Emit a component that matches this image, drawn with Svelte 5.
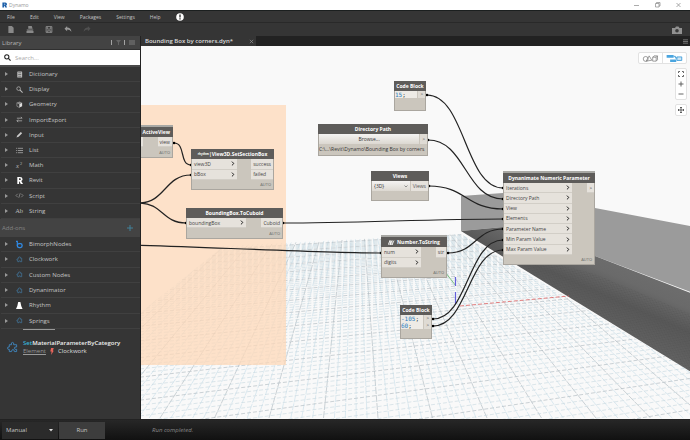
<script>
    let query = $state('');
    let runMode = $state('Manual');
    let view = $state('{3D}');

    const menus = ['File', 'Edit', 'View', 'Packages', 'Settings', 'Help'];

    const library = [
        { name: 'Dictionary', icon: 'book' },
        { name: 'Display', icon: 'lens' },
        { name: 'Geometry', icon: 'cube' },
        { name: 'ImportExport', icon: 'swap' },
        { name: 'Input', icon: 'pen' },
        { name: 'List', icon: 'list' },
        { name: 'Math', icon: 'math' },
        { name: 'Revit', icon: 'revit' },
        { name: 'Script', icon: 'script' },
        { name: 'String', icon: 'string' }
    ];

    const addons = [
        { name: 'BimorphNodes', icon: 'bimorph' },
        { name: 'Clockwork', icon: 'puzzle' },
        { name: 'Custom Nodes', icon: 'puzzle' },
        { name: 'Dynanimator', icon: 'puzzle' },
        { name: 'Rhythm', icon: 'rhythm' },
        { name: 'Springs', icon: 'puzzle' }
    ];

    // node positions are in workspace coordinates
    const nodes = [
        { title: 'ActiveView', x: -37, y: 81, w: 69, h: 31, ports: 10, inW: 38, inputs: [''], outputs: ['view'], auto: true, lip: true, align: 'right' },
        { title: 'View3D.SetSectionBox', prefix: 'rhythm', x: 50, y: 103, w: 83, h: 41, ports: 21, inW: 45, inputs: ['view3D', 'bBox'], outputs: ['success', 'failed'], auto: true },
        { title: 'BoundingBox.ToCuboid', x: 45, y: 162, w: 97, h: 31, ports: 10, inW: 59, inputs: ['boundingBox'], outputs: ['Cuboid'], auto: true },
        { title: 'Code Block', x: 253, y: 35, w: 32, h: 30, code: ['15'] },
        { title: 'Directory Path', x: 177, y: 78, w: 110, h: 32, kind: 'path' },
        { title: 'Views', x: 230, y: 125, w: 58, h: 30, kind: 'views' },
        { title: 'Number.ToString', prefix: 'clockwork', x: 240, y: 191, w: 66, h: 41, ports: 21, inW: 39, inputs: ['num', 'digits'], outputs: ['str'], auto: true, lip: true },
        { title: 'Code Block', x: 259, y: 259, w: 32, h: 34, code: ['-105', '60'] },
        { title: 'Dynanimate Numeric Parameter', x: 362, y: 127, w: 92, h: 92, ports: 72, inW: 68, inputs: ['Iterations', 'Directory Path', 'View', 'Elements', 'Parameter Name', 'Min Param Value', 'Max Param Value'], outputs: ['>'], auto: true, lip: true }
    ];

    const wires = [
        [33, 97, 50, 119],
        [-2, 157, 50, 129],
        [-2, 157, 45, 177],
        [142, 177, 362, 173],
        [-60, 198, 240, 207],
        [286, 49, 362, 142],
        [287, 94, 362, 153],
        [288, 140, 362, 163],
        [307, 207, 362, 183],
        [292, 273, 362, 194],
        [292, 280, 362, 204]
    ];

    function wirePath([x1, y1, x2, y2]) {
        const d = Math.min(70, Math.max(12, (x2 - x1) / 2));
        return `M${x1} ${y1}C${x1 + d} ${y1} ${x2 - d} ${y2} ${x2} ${y2}`;
    }

    // ground grid in two point perspective
    const horizon = 69;
    const floor = 372;
    const rays = [];
    for (let i = -15; i < 58; i++) {
        rays.push({ x: 19 + i * 10.9, major: i % 5 === 0 });
    }
    const rows = [];
    for (let i = 0; i < 76; i++) {
        const y = horizon + 1 / (0.0029 + i * 0.000069);
        rows.push({ y, left: y + (y - horizon) * 0.122, major: i % 5 === 0 });
    }
</script>

{#snippet icon(name)}
    <svg class="icon" viewBox="0 0 16 16" fill="none" stroke="#bbb" stroke-width="1.6">
        {#if name === 'book'}
            <rect x="3" y="1" width="11" height="14" rx="1" fill="#c4c4c4" stroke="none" />
            <path d="M5 4h7M5 8h7M5 12h7" stroke="#555" />
        {:else if name === 'lens'}
            <circle cx="6" cy="6" r="4.2" />
            <path d="M9 9l6 6" stroke-width="2.4" />
        {:else if name === 'cube'}
            <path d="M2 4l6-3 6 3-6 3z" fill="#888" stroke="none" />
            <path d="M8 7l6-3v8l-6 3z" fill="#ddd" stroke="none" />
            <path d="M2 4l6 3v8l-6-3z" stroke-width="1.2" />
        {:else if name === 'swap'}
            <path d="M2 5h12M11 2l3 3M14 11H2M5 8l-3 3 3 3" />
        {:else if name === 'pen'}
            <path d="M1 15l2-5 8-8 3 3-8 8z" fill="#ccc" stroke="none" />
        {:else if name === 'list'}
            <path d="M0 3h2M4 3h12M0 8h2M4 8h12M0 13h2M4 13h12" />
        {:else if name === 'math'}
            <text x="0" y="14" class="glyph italic">x</text>
            <text x="9" y="7" class="glyph tiny">2</text>
        {:else if name === 'revit'}
            <path d="M3 0h6q6 0 6 5 0 3-3 4l4 7h-5L8 10H7v6H3zM7 3v4h2q2 0 2-2T9 3z" fill="#fff" stroke="none" fill-rule="evenodd" />
        {:else if name === 'script'}
            <path d="M4 4L0 8l4 4M12 4l4 4-4 4M9.500 3l-3 10" stroke-width="1.200" />
        {:else if name === 'string'}
            <text x="-2" y="14" class="glyph">Ab</text>
        {:else if name === 'bimorph'}
            <path d="M0 1h3v9" stroke="#2f8ae6" stroke-width="2.600" />
            <rect x="3" y="6" width="11" height="9" rx="4" stroke="#2f8ae6" stroke-width="3" />
        {:else if name === 'rhythm'}
            <path d="M5 0h5l2 9 3 7H0l3-7z" fill="#fff" stroke="none" />
        {:else}
            <path d="M4 5h2q-1-3 2-3t2 3h3v8h-3q0-3-2-2t-1 2H4v-3q-3 0-2-2t2 0z" stroke="#4379a0" stroke-width="1.600" />
        {/if}
    </svg>
{/snippet}

{#snippet category(item)}
    <li>
        <button class="category">
            <span class="arrow"></span>
            {@render icon(item.icon)}
            <span>{item.name}</span>
        </button>
    </li>
{/snippet}

<div class="app">
    <header class="titlebar">
        <svg class="logo" viewBox="0 0 12 12"><path d="M1 0h7q4 0 4 4 0 2-2 3l2 5H8L6 8H5v4H1zM5 3v2h2q1 0 1-1T7 3z" fill="#1c5fa8" fill-rule="evenodd" /></svg>
        <span>Dynamo</span>
        <div class="window-buttons">
            <button aria-label="Minimize"><svg viewBox="0 0 6 6"><path d="M0 3.500h5" /></svg></button>
            <button aria-label="Restore"><svg viewBox="0 0 6 6"><path d="M.5 1.500h3.500v3.500H.5zM1.500 1.500v-1H5V4H4" /></svg></button>
            <button aria-label="Close"><svg viewBox="0 0 6 6"><path d="M.5 1l4 4M4.500 1l-4 4" /></svg></button>
        </div>
    </header>

    <nav class="menu">
        {#each menus as name}
            <button>{name}</button>
        {/each}
        <button aria-label="Notifications">
            <svg class="alert" viewBox="0 0 8 8"><circle cx="4" cy="4" r="3.800" fill="#fff" /><path d="M4 1.500v3M4 5.300v1.200" stroke="#222" stroke-width="1.300" /></svg>
        </button>
    </nav>

    <div class="toolbar">
        <button aria-label="New"><svg viewBox="0 0 8 8"><path d="M1 0h4l2 2v6H1z" fill="#898989" /></svg></button>
        <button aria-label="Open"><svg viewBox="0 0 8 8"><path d="M2 0h4l1 3H2zM0 4h8l-1 1H1zM0 5.500h8V8H0z" fill="#898989" /></svg></button>
        <button aria-label="Save"><svg viewBox="0 0 8 8"><path d="M.7.7h6.600v6.600H.7zM2 1v2.500h4V1M2 7.300V5.500h4v1.800" fill="none" stroke="#929292" /></svg></button>
        <button aria-label="Undo"><svg viewBox="0 0 8 8"><path d="M3 0v1.800q4 0 5 4.700Q6 4 3 4v2L0 3z" fill="#999" /></svg></button>
        <button aria-label="Redo"><svg viewBox="0 0 8 8"><path d="M5 0v1.800q-4 0-5 4.700Q2 4 5 4v2l3-3z" fill="#505050" /></svg></button>
        <button class="camera" aria-label="Export image"><svg viewBox="0 0 10 8"><path d="M0 2h3l1-1.500h2.500L7.500 2H10v6H0z" fill="#919191" /><circle cx="5" cy="4.800" r="1.800" fill="#3b3b3b" /></svg></button>
    </div>

    <div class="main">
        <aside>
            <div class="library-head">
                <span>Library</span>
                <svg viewBox="0 0 26 6"><path d="M1.500 0v5M14.500 0v5" stroke="#a3a3a3" /><path d="M6 0h5L9 2.500V5H8V2.500z" fill="#656565" /><path d="M19 0h6v5h-6z" fill="#606060" /></svg>
            </div>
            <label class="search">
                <svg viewBox="0 0 8 8"><circle cx="3.200" cy="3.200" r="2.400" fill="none" stroke="#222" stroke-width="1.200" /><path d="M5 5l2.500 2.500" stroke="#222" stroke-width="1.400" /></svg>
                <input type="text" placeholder="Search..." aria-label="Search" bind:value={query} />
            </label>
            <ul class="categories">
                {#each library as item}
                    {@render category(item)}
                {/each}
            </ul>
            <div class="addons-head">
                <span>Add-ons</span>
                <button aria-label="Add package"><svg viewBox="0 0 6 6"><path d="M3 0v6M0 3h6" stroke="#42829b" /></svg></button>
            </div>
            <ul class="categories addons">
                {#each addons as item}
                    {@render category(item)}
                {/each}
            </ul>
            <div class="previous"></div>
            <div class="result">
                <svg class="puzzle" viewBox="0 0 12 12"><path d="M2.500 3.500H5Q4 1 6 1t1.200 2.500h3.300V6Q8 5.500 8 7.300t2.500 1.200v2.500H8Q8 8.800 6.500 8.800T5 11H2.500V8.500Q.5 9 .5 7.300T2.500 6z" fill="none" stroke="#3f86bd" /></svg>
                <div>
                    <div class="result-name"><mark>Set</mark>MaterialParameterByCategory</div>
                    <div class="result-info">
                        <a href="#element">Element</a>
                        <svg viewBox="0 0 4 8"><path d="M1 0h3L3 3h1L1 8l.5-4H0z" fill="#e8655c" /></svg>
                        <span>Clockwork</span>
                    </div>
                </div>
            </div>
        </aside>

        <section class="workspace">
            <div class="tabs">
                <div class="tab">
                    <span>Bounding Box by corners.dyn*</span>
                    <button aria-label="Close tab"><svg viewBox="0 0 6 6"><path d="M1 1l4 4M5 1L1 5" stroke="#999" stroke-width=".8" /></svg></button>
                </div>
                <button class="tab-menu" aria-label="Open tabs"><svg viewBox="0 0 6 6"><path d="M0 1h6M0 3h6M0 5h6" stroke="#999" stroke-width=".8" /></svg></button>
            </div>

            <div class="canvas">
                <svg class="scene">
                    <defs>
                        <clipPath id="ground">
                            <path d="M-1 267L83 200L320 188L560 332V374H-1z" />
                        </clipPath>
                        <linearGradient id="shade" gradientUnits="userSpaceOnUse" x1="460" y1="200" x2="425" y2="280">
                            <stop offset="0" stop-color="#6e6e6e" />
                            <stop offset=".25" stop-color="#6a6a6a" />
                            <stop offset=".5" stop-color="#585858" />
                            <stop offset="1" stop-color="#666" />
                        </linearGradient>
                        <pattern id="grain" width="4" height="3" patternUnits="userSpaceOnUse" patternTransform="rotate(28)">
                            <path d="M0 1h2M2 2.500h2" stroke="#484848" stroke-width=".6" opacity=".5" />
                        </pattern>
                    </defs>
                    <g clip-path="url(#ground)">
                        {#each rays as ray}
                            <line class="grid-line" class:major={ray.major} x1={ray.x} y1={floor} x2={214 + (ray.x - 214) * 0.35} y2={horizon + (floor - horizon) * 0.35} />
                        {/each}
                        {#each rows as row}
                            <line class="grid-line dashed" class:major={row.major} x1="-1" y1={row.left} x2="600" y2={row.y - (row.y - horizon) * 0.17} />
                        {/each}
                    </g>
                    <path d="M320 150L362 147L454 162L560 182V250L454 210L362 181L320 185z" fill="#9b9b9b" />
                    <path d="M320 185L362 181L454 210L560 251V332z" fill="url(#shade)" />
                    <path d="M345 200L454 228L560 272V332z" fill="url(#grain)" />
                    <path d="M294 213L315 240" stroke="#67b867" stroke-width=".8" />
                    <path d="M314.500 231v9M314.500 246v12" stroke="#6360dc" stroke-width="1.200" />
                    <path d="M319 260L428 250" stroke="#dd605f" stroke-width=".8" stroke-dasharray="4 2" />
                    <rect class="group" x="-1" y="59" width="146" height="260" />
                    {#each wires as wire}
                        <path class="wire" d={wirePath(wire)} />
                        <circle cx={wire[0]} cy={wire[1]} r="1.300" />
                        <circle cx={wire[2]} cy={wire[3]} r="1.300" />
                    {/each}
                </svg>

                {#each nodes as node}
                    <article class="node" class:lip={node.lip} style="left: {node.x}px; top: {node.y}px; width: {node.w}px; height: {node.h}px">
                        <h2 class:right={node.align === 'right'}>
                            {#if node.prefix === 'rhythm'}
                                <small>rhythm</small><span>|</span>
                            {:else if node.prefix === 'clockwork'}
                                <svg viewBox="0 0 8 5"><path d="M0 5l2-4.500V5L4 .5V5L6 .5M2 .5l1 4.500" fill="none" stroke="#fff" stroke-width=".8" /></svg>
                            {/if}
                            <span>{node.title}</span>
                        </h2>
                        {#if node.code}
                            <div class="code">
                                {#each node.code as line}
                                    <div class="code-line"><code><b>{line}</b>;</code><span>&gt;</span></div>
                                {/each}
                            </div>
                        {:else if node.kind === 'path'}
                            <div class="picker"><button>Browse...</button><span>&gt;</span></div>
                            <div class="path">C:\...\Revit\Dynamo\Bounding Box by corners</div>
                        {:else if node.kind === 'views'}
                            <div class="picker">
                                <div class="drop">
                                    <select aria-label="View" bind:value={view}><option>{'{3D}'}</option></select>
                                    <svg viewBox="0 0 4 3"><path d="M.5.5L2 2 3.500.5" fill="none" stroke="#777" stroke-width=".8" /></svg>
                                </div>
                                <span class="views-out">Views</span>
                            </div>
                        {:else}
                            <div class="ports" style="height: {node.ports}px">
                                <div class="inputs" style="width: {node.inW}px">
                                    {#each node.inputs as port}
                                        <div class="port">
                                            <span>{port}</span>
                                            <svg viewBox="0 0 4 6"><path d="M.7.7L3 3 .7 5.300" fill="none" stroke="#222" stroke-width="1.200" /></svg>
                                        </div>
                                    {/each}
                                </div>
                                <div class="outputs" style="grid-template-rows: repeat({node.inputs.length}, 1fr)">
                                    {#each node.outputs as port}
                                        <div class="port">{port}</div>
                                    {/each}
                                </div>
                            </div>
                        {/if}
                        {#if node.auto}
                            <footer>AUTO</footer>
                        {/if}
                    </article>
                {/each}

                <div class="view-controls">
                    <div class="modes">
                        <button aria-label="3D preview">
                            <svg viewBox="0 0 18 8" fill="none" stroke="#777" stroke-width=".8"><circle cx="3.500" cy="4.500" r="2.800" /><path d="M4 7l3.500-6L10.500 6z" /><path d="M11.500 2.500h4v4.500h-4zM11.500 2.500L13 1h4v4.500L15.500 7M15.500 2.500L17 1" /></svg>
                        </button>
                        <button aria-label="Graph view">
                            <svg viewBox="0 0 18 8"><path d="M0 0h8v3H0zM4 5h7v3H4z" fill="#4aa5df" /><path d="M11.700 2.200h5.600v4h-5.600zM8 1.500h2v2h2" fill="#cfe8f7" stroke="#3b9bd9" /></svg>
                        </button>
                    </div>
                    <div class="zoom">
                        <button aria-label="Fit"><svg viewBox="0 0 6 6"><path d="M.5 2V.5H2M4 .5h1.500V2M5.500 4v1.500H4M2 5.500H.5V4" /></svg></button>
                        <button aria-label="Zoom in"><svg viewBox="0 0 6 6"><path d="M3 .5v5M.5 3h5" /></svg></button>
                        <button aria-label="Zoom out"><svg viewBox="0 0 6 6"><path d="M.5 3h5" /></svg></button>
                    </div>
                    <div class="zoom">
                        <button aria-label="Pan"><svg viewBox="0 0 6 6"><path d="M3 0v6M0 3h6M2 1l1-1 1 1M2 5l1 1 1-1M1 2L0 3l1 1M5 2l1 1-1 1" /></svg></button>
                    </div>
                </div>
            </div>
        </section>
    </div>

    <footer class="runbar">
        <div class="run-mode">
            <select aria-label="Run mode" bind:value={runMode}>
                <option>Manual</option>
                <option>Automatic</option>
            </select>
            <svg viewBox="0 0 4 3"><path d="M0 0h4L2 2.500z" fill="#ddd" /></svg>
        </div>
        <button class="run">Run</button>
        <em>Run completed.</em>
    </footer>
</div>

<style>
    :global(body) {
        margin: 0;
    }

    .app {
        height: 100vh;
        display: flex;
        flex-direction: column;
        overflow: hidden;
        background: #353535;
        color: #c4c4c4;
        font: 6px/8px "Open Sans", "Noto Sans", sans-serif;
    }

    button, input, select {
        margin: 0;
        padding: 0;
        border: 0;
        background: none;
        color: inherit;
        font: inherit;
        appearance: none;
    }

    svg {
        display: block;
        flex: none;
    }

    .titlebar {
        height: 10px;
        flex: none;
        display: flex;
        align-items: center;
        gap: 2px;
        padding: 0 8px 0 2px;
        background: #fff;
        color: #999;
        font-size: 5px;
        border-bottom: 1px solid #1b1f1f;
    }

    .logo {
        width: 5px;
        height: 6px;
    }

    .window-buttons {
        margin-left: auto;
        display: flex;
        gap: 15px;
    }

    .window-buttons svg {
        width: 6px;
        height: 6px;
        fill: none;
        stroke: #888;
        stroke-width: 0.7;
    }

    .menu {
        height: 11px;
        flex: none;
        display: flex;
        align-items: center;
        gap: 15px;
        padding: 0 7px;
        border-bottom: 1px solid #292929;
        font-size: 5px;
    }

    .alert {
        width: 8px;
        height: 8px;
    }

    .toolbar {
        height: 13px;
        flex: none;
        display: flex;
        align-items: center;
        gap: 11px;
        padding: 0 8px 0 7px;
    }

    .toolbar svg {
        width: 8px;
        height: 7px;
    }

    .toolbar .camera {
        margin-left: auto;
    }

    .toolbar .camera svg {
        width: 10px;
        height: 8px;
    }

    .main {
        flex: 1;
        min-height: 0;
        display: flex;
    }

    aside {
        width: 140px;
        flex: none;
        border-right: 1px solid #222;
        overflow: hidden;
    }

    .library-head {
        height: 13px;
        display: flex;
        align-items: center;
        justify-content: space-between;
        padding: 0 4px 0 2px;
        background: #434343;
        border-bottom: 1px solid #303030;
        color: #b5b5b5;
    }

    .library-head svg {
        width: 26px;
        height: 6px;
    }

    .search {
        height: 15px;
        display: flex;
        align-items: center;
        gap: 4px;
        padding: 0 4px;
        background: #fff;
        color: #333;
        border-bottom: 2px solid #4a4a4a;
    }

    .search svg {
        width: 7px;
        height: 7px;
    }

    .search input {
        flex: 1;
        min-width: 0;
        outline: none;
    }

    .search input::placeholder {
        color: #aaa;
    }

    .categories {
        height: 152px;
        margin: 0;
        padding: 0 0 0 1px;
        display: grid;
        grid-auto-rows: 1fr;
        list-style: none;
    }

    .categories.addons {
        height: 92px;
    }

    .categories li {
        display: grid;
        border-bottom: 1px solid #404040;
    }

    .category {
        display: flex;
        align-items: center;
        padding-left: 4px;
        text-align: left;
    }

    .arrow {
        border: 2px solid transparent;
        border-left: 3px solid #999;
        border-right: 0;
    }

    .icon {
        width: 7px;
        height: 7px;
        margin: 0 6px 0 8px;
        overflow: visible;
    }

    .glyph {
        font: 15px "Liberation Serif", serif;
        fill: #bbb;
        stroke: none;
    }

    .glyph.italic {
        font-style: italic;
    }

    .glyph.tiny {
        font-size: 10px;
    }

    .addons-head {
        height: 18px;
        display: flex;
        align-items: center;
        justify-content: space-between;
        padding: 0 7px 0 2px;
        background: #434343;
        color: #858585;
    }

    .addons-head svg {
        width: 6px;
        height: 6px;
    }

    .previous {
        width: 32px;
        height: 1px;
        margin-left: 23px;
        background: #999;
    }

    .result {
        display: flex;
        align-items: center;
        gap: 5px;
        padding: 9px 7px;
    }

    .puzzle {
        width: 11px;
        height: 12px;
    }

    .result-name {
        color: #eee;
        font-weight: 600;
    }

    .result-name mark {
        background: none;
        color: #37b5dc;
    }

    .result-info {
        display: flex;
        align-items: center;
        gap: 4px;
        color: #ddd;
    }

    .result-info a {
        color: #999;
    }

    .result-info svg {
        width: 4px;
        height: 7px;
    }

    .workspace {
        flex: 1;
        min-width: 0;
        display: flex;
        flex-direction: column;
    }

    .tabs {
        height: 10px;
        flex: none;
        display: flex;
        justify-content: space-between;
        align-items: center;
        padding-right: 2px;
        background: #222;
    }

    .tab {
        width: 115px;
        height: 10px;
        display: flex;
        align-items: center;
        justify-content: space-between;
        padding: 0 2px 0 4px;
        box-sizing: border-box;
        background: #353535;
        color: #ddd;
        font-weight: 600;
        white-space: nowrap;
    }

    .tabs svg {
        width: 5px;
        height: 5px;
    }

    .canvas {
        flex: 1;
        min-height: 0;
        position: relative;
        overflow: hidden;
        background: #f9f9f9;
    }

    .scene {
        width: 100%;
        height: 100%;
    }

    .grid-line {
        stroke: #c6deea;
        stroke-width: 0.6;
        stroke-dasharray: 7 1;
    }

    .grid-line.dashed {
        stroke: #c6d7df;
        stroke-dasharray: 4 2;
    }

    .grid-line.major {
        stroke: #aab6bc;
    }

    .group {
        fill: #fdd8b8;
        opacity: 0.75;
    }

    .wire {
        fill: none;
        stroke: #222;
        stroke-width: 1.2;
    }

    .node {
        position: absolute;
        box-sizing: border-box;
        background: #cbc6bd;
        border: 1px solid #aaa69f;
        border-top: 0;
        color: #444;
        font-size: 5px;
        white-space: nowrap;
    }

    .node.lip {
        box-shadow: 0 -2px #a8a8a4;
    }

    .node h2 {
        height: 10px;
        margin: 0 -1px;
        display: flex;
        align-items: center;
        justify-content: center;
        background: #5e5c5a;
        color: #fff;
        font-size: 5px;
        line-height: 10px;
        font-weight: 700;
    }

    .node h2.right {
        justify-content: flex-end;
        padding-right: 3px;
    }

    .node h2 small {
        font-size: 3px;
    }

    .node h2 svg {
        width: 8px;
        height: 5px;
        margin-right: 1px;
    }

    .ports {
        display: flex;
        justify-content: space-between;
    }

    .inputs, .outputs {
        display: grid;
        grid-auto-rows: 1fr;
    }

    .port {
        display: flex;
        align-items: center;
        justify-content: space-between;
        padding: 0 2px;
        background: #e6e2dc;
        border-bottom: 1px solid #d2cec7;
    }

    .port svg {
        width: 4px;
        height: 5px;
    }

    .node footer {
        position: absolute;
        right: 2px;
        bottom: 0;
        font-size: 4px;
        line-height: 8px;
        color: #666;
    }

    .code-line {
        height: 7px;
        display: flex;
        justify-content: space-between;
        background: #eeebe6;
        line-height: 7px;
    }

    .code-line code {
        font: 6px/7px "DejaVu Sans Mono", monospace;
        color: #333;
    }

    .code-line b {
        color: #2d7bbd;
        font-weight: 400;
    }

    .code-line span, .picker > span {
        padding: 0 2px;
        background: #dfdbd4;
        border-left: 1px solid #cbc6bd;
        color: #555;
    }

    .picker {
        height: 10px;
        display: flex;
        line-height: 10px;
    }

    .picker button, .drop {
        flex: 1;
        min-width: 0;
        background: linear-gradient(#f4f3f2, #dcd8d1);
        color: #333;
    }

    .drop {
        display: flex;
        align-items: center;
        padding: 0 2px;
    }

    .drop select {
        flex: 1;
        min-width: 0;
    }

    .drop svg {
        width: 4px;
        height: 3px;
    }

    .picker .views-out {
        background: #e6e2dc;
    }

    .path {
        line-height: 11px;
        color: #333;
    }

    .view-controls {
        position: absolute;
        top: 6px;
        right: 3px;
        display: flex;
        flex-direction: column;
        align-items: flex-end;
        gap: 4px;
    }

    .modes, .zoom {
        background: #fff;
        border: 1px solid #e2e2e2;
        border-radius: 2px;
    }

    .modes {
        display: flex;
    }

    .modes button {
        height: 10px;
        padding: 0 3px;
    }

    .modes button + button {
        border-left: 1px solid #e2e2e2;
    }

    .modes svg {
        width: 17px;
        height: 7px;
    }

    .zoom button {
        width: 10px;
        height: 10px;
        display: grid;
        place-items: center;
    }

    .zoom svg {
        width: 6px;
        height: 6px;
        fill: none;
        stroke: #555;
        stroke-width: 0.9;
    }

    .runbar {
        height: 21px;
        flex: none;
        display: flex;
        align-items: center;
        gap: 1px;
        padding: 1px 2px;
        box-sizing: border-box;
        background: linear-gradient(#272727, #111);
        border-top: 1px solid #222;
    }

    .run-mode {
        width: 56px;
        height: 17px;
        display: flex;
        align-items: center;
        padding: 0 5px 0 4px;
        box-sizing: border-box;
        background: #2b2b2b;
    }

    .run-mode select {
        flex: 1;
        min-width: 0;
    }

    .run-mode svg {
        width: 4px;
        height: 3px;
    }

    .run {
        width: 46px;
        height: 17px;
        background: #3d3d3d;
    }

    .runbar em {
        margin-left: 46px;
        color: #888;
    }
</style>
